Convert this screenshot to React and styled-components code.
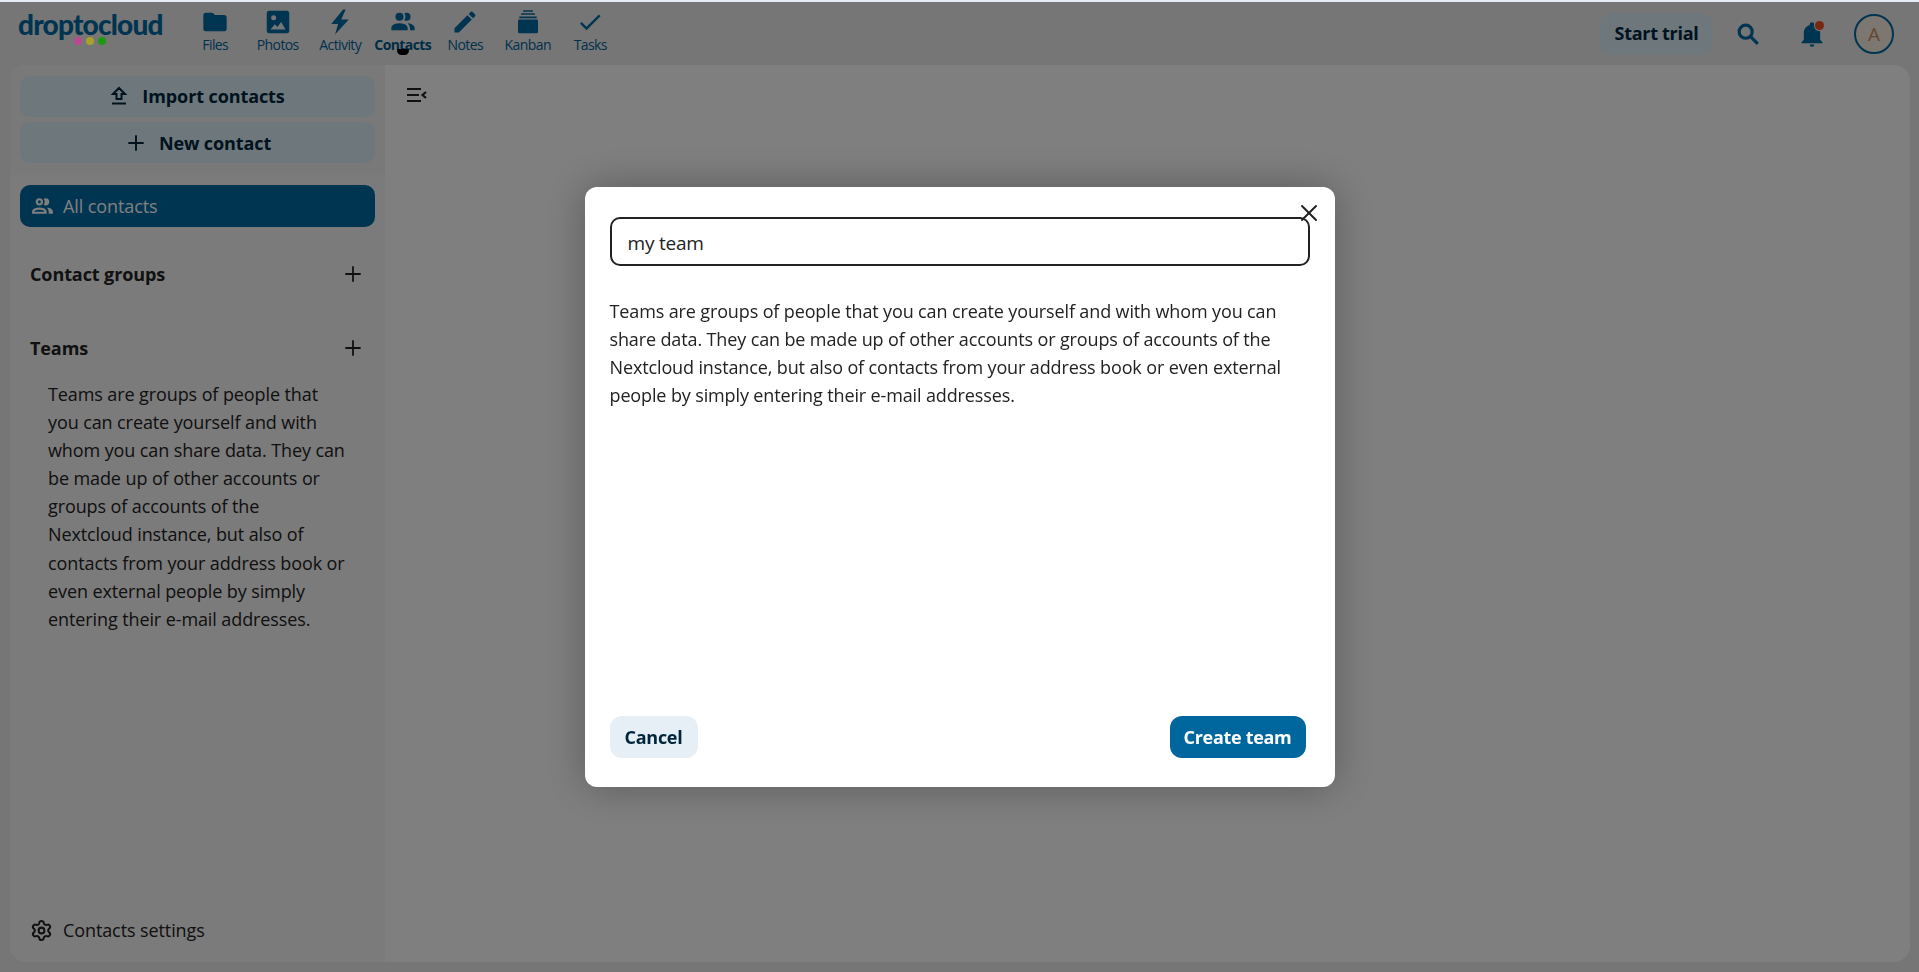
import React from "react";
import styled, { createGlobalStyle } from "styled-components";
import { Plus, Settings, X } from "lucide-react";

const GlobalStyle = createGlobalStyle`
  html, body { margin: 0; height: 100%; }
  body {
    background: #ececec;
    font-family: "Open Sans", "Noto Sans", sans-serif;
    color: #222;
    overflow: hidden;
  }
  * { box-sizing: border-box; }
`;

const APPS = [
  { label: "Files", d: "M10 4H4C2.89 4 2 4.89 2 6V18A2 2 0 0 0 4 20H20A2 2 0 0 0 22 18V8C22 6.89 21.1 6 20 6H12L10 4Z" },
  { label: "Photos", big: true, d: "M5 3h14a2 2 0 0 1 2 2v14a2 2 0 0 1-2 2H5a2 2 0 0 1-2-2V5a2 2 0 0 1 2-2zM8.5 6.5a2 2 0 1 0 0 4 2 2 0 0 0 0-4zM6 18h12l-3.5-6-3 4-2-2.2z" },
  { label: "Activity", big: true, d: "M14.5 2 5 13.5h5.5L8 22 19 10h-6l3.5-8z" },
  { label: "Contacts", active: true, d: "M16 17v2H2v-2s0-4 7-4 7 4 7 4m-3.5-9.5A3.5 3.5 0 1 0 9 11a3.5 3.5 0 0 0 3.5-3.5m3.44 5.5A5.32 5.32 0 0 1 18 17v2h4v-2s0-3.63-6.06-4M15 4a3.39 3.39 0 0 0-1.93.59 5 5 0 0 1 0 5.82A3.39 3.39 0 0 0 15 11a3.5 3.5 0 0 0 0-7z" },
  { label: "Notes", d: "M20.71 7.04c.39-.39.39-1.04 0-1.41l-2.34-2.34c-.37-.39-1.02-.39-1.41 0l-1.84 1.83 3.75 3.75M3 17.25V21h3.75L17.81 9.93l-3.75-3.75L3 17.25z" },
  { label: "Kanban", big: true, d: "M8 2.5h8v1.2H8zM6.5 5h11v1.2h-11zM5 7.5h14V9H5zM5 10h14a1 1 0 0 1 1 1v9a1 1 0 0 1-1 1H5a1 1 0 0 1-1-1v-9a1 1 0 0 1 1-1z" },
  { label: "Tasks", d: "M21 7 9 19l-5.5-5.5 1.41-1.41L9 16.17 19.59 5.59 21 7z" },
];

const PEOPLE_OUTLINE =
  "M13.07 10.41a5 5 0 0 0 0-5.82A3.39 3.39 0 0 1 15 4a3.5 3.5 0 0 1 0 7 3.39 3.39 0 0 1-1.93-.59M5.5 7.5A3.5 3.5 0 1 1 9 11a3.5 3.5 0 0 1-3.5-3.5m2 0A1.5 1.5 0 1 0 9 6a1.5 1.5 0 0 0-1.5 1.5M16 17v2H2v-2s0-4 7-4 7 4 7 4m-2 0c-.14-.78-1.33-2-5-2s-4.93 1.31-5 2m11.95-4A5.32 5.32 0 0 1 18 17v2h4v-2s0-3.63-6.06-4Z";

const TEAMS_TEXT =
  "Teams are groups of people that you can create yourself and with whom you can share data. They can be made up of other accounts or groups of accounts of the Nextcloud instance, but also of contacts from your address book or even external people by simply entering their e-mail addresses.";

function Glyph({ d, size = 28 }) {
  return (
    <svg width={size} height={size} viewBox="0 0 24 24" fill="currentColor" fillRule="evenodd">
      <path d={d} />
    </svg>
  );
}

function App() {
  return (
    <Page>
      <GlobalStyle />
      <TopStrip />
      <Header>
        <Logo>
          droptocloud
          <LogoDots>
            <Dot $color="#b84a90" />
            <Dot $color="#a9a030" />
            <Dot $color="#1e9a10" />
          </LogoDots>
        </Logo>
        <AppNav>
          {APPS.map((app) => (
            <AppItem key={app.label} $active={app.active}>
              <AppIcon>
                <Glyph d={app.d} size={app.big ? 30 : 28} />
              </AppIcon>
              {app.label}
              {app.active && <ActiveMark />}
            </AppItem>
          ))}
        </AppNav>
        <HeaderRight>
          <TrialButton>Start trial</TrialButton>
          <HeaderIcon>
            <svg width="28" height="28" viewBox="0 0 24 24" fill="none" stroke="currentColor" strokeWidth="2.7">
              <circle cx="10" cy="10" r="5.6" />
              <path d="m14 14 6.4 6.4" />
            </svg>
          </HeaderIcon>
          <HeaderIcon>
            <Glyph size={28} d="M21 19v1H3v-1l2-2v-6c0-3.1 2.03-5.83 5-6.71V4a2 2 0 0 1 2-2 2 2 0 0 1 2 2v.29c2.97.88 5 3.61 5 6.71v6l2 2m-7 2a2 2 0 0 1-2 2 2 2 0 0 1-2-2" />
            <BellBadge />
          </HeaderIcon>
          <Avatar>A</Avatar>
        </HeaderRight>
      </Header>

      <Panel>
        <Sidebar>
          <SidebarActions>
            <ActionButton>
              <svg width="24" height="24" viewBox="0 0 24 24" fill="none" stroke="currentColor" strokeWidth="2">
                <path d="M9.5 15V10H6l6-6 6 6h-3.5v5z" />
                <path d="M5 19.5h14" />
              </svg>
              Import contacts
            </ActionButton>
            <ActionButton>
              <Plus size={24} strokeWidth={1.9} />
              New contact
            </ActionButton>
          </SidebarActions>
          <SidebarNav>
            <NavEntry>
              <Glyph d={PEOPLE_OUTLINE} size={25} />
              All contacts
            </NavEntry>
            <SectionHead $gap={32}>
              Contact groups
              <Plus size={24} strokeWidth={1.8} />
            </SectionHead>
            <SectionHead $gap={44}>
              Teams
              <Plus size={24} strokeWidth={1.8} />
            </SectionHead>
            <SidebarText>{TEAMS_TEXT}</SidebarText>
          </SidebarNav>
          <SettingsRow>
            <Settings size={23} strokeWidth={2.1} />
            Contacts settings
          </SettingsRow>
        </Sidebar>
        <Main>
          <svg width="24" height="24" viewBox="0 0 24 24" fill="none" stroke="currentColor" strokeWidth="2.2">
            <path d="M2 6h14M2 12h12M2 18h14" />
            <path d="M21 9l-3.5 3 3.5 3" />
          </svg>
        </Main>
      </Panel>

      <Overlay>
        <Modal>
          <CloseButton>
            <X size={28} strokeWidth={1.7} />
          </CloseButton>
          <NameInput defaultValue="my team" />
          <ModalText>{TEAMS_TEXT}</ModalText>
          <ModalFooter>
            <CancelButton>Cancel</CancelButton>
            <CreateButton>Create team</CreateButton>
          </ModalFooter>
        </Modal>
      </Overlay>
    </Page>
  );
}

const Page = styled.div`
  height: 100vh;
  display: flex;
  flex-direction: column;
`;

const TopStrip = styled.div`
  height: 2px;
  background: #e8ecf6;
  flex: none;
`;

const Header = styled.header`
  height: 63px;
  flex: none;
  display: flex;
  padding: 0 25px 0 18px;
`;

const Logo = styled.div`
  position: relative;
  width: 166px;
  font-family: "Lato", sans-serif;
  font-weight: 900;
  font-size: 28px;
  line-height: 30px;
  padding-top: 7px;
  letter-spacing: -0.8px;
  color: #006aa3;
`;

const LogoDots = styled.div`
  position: absolute;
  z-index: 1;
  top: 35px;
  left: 56px;
  display: flex;
  gap: 4px;
`;

const Dot = styled.span`
  width: 8px;
  height: 8px;
  border-radius: 50%;
  background: ${(p) => p.$color};
`;

const AppNav = styled.nav`
  display: flex;
`;

const AppItem = styled.div`
  position: relative;
  width: 62.5px;
  display: flex;
  flex-direction: column;
  align-items: center;
  padding-top: 6px;
  font-size: 14px;
  line-height: 18px;
  letter-spacing: -0.6px;
  white-space: nowrap;
  font-weight: ${(p) => (p.$active ? 700 : 400)};
  color: ${(p) => (p.$active ? "#005a8c" : "#00639a")};
`;

const AppIcon = styled.div`
  height: 28px;
  display: flex;
  align-items: center;
  justify-content: center;
  color: #006aa3;
`;

const ActiveMark = styled.span`
  position: absolute;
  left: 25px;
  top: 47px;
  width: 12px;
  height: 6px;
  background: #000;
  border-radius: 2px 2px 6px 6px;
`;

const HeaderRight = styled.div`
  margin-left: auto;
  display: flex;
  align-items: center;
`;

const TrialButton = styled.button`
  width: 113px;
  height: 42px;
  border: 0;
  padding: 0 0 2px;
  border-radius: 12px;
  background: #dcf0f8;
  color: #00263c;
  font: 700 18px "Open Sans", sans-serif;
  letter-spacing: -0.3px;
  margin-right: 21px;
`;

const HeaderIcon = styled.div`
  position: relative;
  width: 28px;
  height: 28px;
  margin-right: 36px;
  color: #006aa3;
  &:nth-of-type(2) { margin-right: 28px; }
`;

const BellBadge = styled.span`
  position: absolute;
  top: 1px;
  right: 2px;
  width: 9px;
  height: 9px;
  border-radius: 50%;
  background: #f0501e;
  box-shadow: 0 0 0 1px #ececec;
`;

const Avatar = styled.div`
  width: 40px;
  height: 40px;
  border-radius: 50%;
  border: 2px solid #006aa3;
  background: #f8eee0;
  color: #c98f5e;
  font-size: 19px;
  display: flex;
  align-items: center;
  justify-content: center;
`;

const Panel = styled.div`
  height: 897px;
  margin: 0 9px 0 10px;
  display: flex;
  background: #fff;
  border-radius: 16px;
  overflow: hidden;
`;

const Sidebar = styled.aside`
  width: 375px;
  flex: none;
  display: flex;
  flex-direction: column;
  background: #f6f6f6;
`;

const SidebarActions = styled.div`
  height: 110px;
  padding: 11px 10px;
  display: flex;
  flex-direction: column;
  gap: 5px;
  background: #f2f2f2;
`;

const ActionButton = styled.button`
  height: 41px;
  border: 0;
  border-radius: 10px;
  background: #dcf0f8;
  color: #00263c;
  font: 700 18px "Open Sans", sans-serif;
  letter-spacing: -0.1px;
  display: flex;
  align-items: center;
  justify-content: center;
  gap: 11px;
  &:first-child { padding-bottom: 3px; padding-left: 3px; }
`;

const SidebarNav = styled.nav`
  padding: 10px 10px 0;
`;

const NavEntry = styled.div`
  height: 42px;
  border-radius: 10px;
  background: #006aa3;
  color: #fff;
  font-size: 18px;
  letter-spacing: -0.1px;
  display: flex;
  align-items: center;
  gap: 8px;
  padding: 0 10px;
`;

const SectionHead = styled.div`
  height: 30px;
  margin-top: ${(p) => p.$gap}px;
  padding: 0 10px;
  display: flex;
  align-items: center;
  justify-content: space-between;
  font-size: 18px;
  font-weight: 700;
  letter-spacing: -0.1px;
`;

const SidebarText = styled.p`
  margin: 17px 0 0 28px;
  width: 300px;
  font-size: 18px;
  line-height: 28.1px;
  letter-spacing: -0.1px;
`;

const SettingsRow = styled.div`
  margin-top: auto;
  height: 30px;
  margin-bottom: 17px;
  padding-left: 20px;
  display: flex;
  align-items: center;
  gap: 10px;
  font-size: 18px;
  letter-spacing: -0.1px;
`;

const Main = styled.main`
  flex: 1;
  padding: 18px 20px;
`;

const Overlay = styled.div`
  position: fixed;
  inset: 2px 0 0;
  background: rgba(0, 0, 0, 0.5);
  display: flex;
  align-items: center;
  justify-content: center;
`;

const Modal = styled.div`
  position: relative;
  width: 750px;
  height: 600px;
  padding: 30px 25px 29px;
  display: flex;
  flex-direction: column;
  background: #fff;
  border-radius: 12px;
  box-shadow: 0 0 40px rgba(0, 0, 0, 0.3);
`;

const CloseButton = styled.button`
  position: absolute;
  top: 12px;
  right: 12px;
  width: 28px;
  height: 28px;
  padding: 0;
  border: 0;
  background: none;
  color: #222;
`;

const NameInput = styled.input`
  height: 49px;
  flex: none;
  padding: 2px 16px 0;
  border: 2px solid #222;
  border-radius: 10px;
  background: #fff;
  color: #222;
  font: 400 19px "Open Sans", sans-serif;
  letter-spacing: -0.2px;
  outline: none;
`;

const ModalText = styled.p`
  margin: 31px 0 0;
  font-size: 18px;
  line-height: 28px;
  letter-spacing: -0.13px;
`;

const ModalFooter = styled.div`
  margin-top: auto;
  padding-right: 4px;
  display: flex;
  justify-content: space-between;
`;

const CancelButton = styled.button`
  width: 88px;
  height: 42px;
  border: 0;
  border-radius: 12px;
  background: #e6eef6;
  color: #00263c;
  font: 700 18px "Open Sans", sans-serif;
  letter-spacing: -0.3px;
`;

const CreateButton = styled(CancelButton)`
  width: 136px;
  background: #00679e;
  color: #fff;
`;

export default App;
